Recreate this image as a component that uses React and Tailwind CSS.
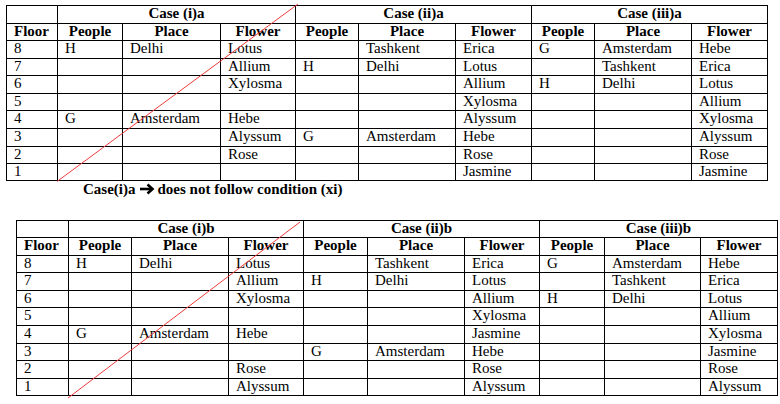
import React from "react";

const topCases = [
  {
    title: "Case (i)a",
    rows: [
      ["H", "Delhi", "Lotus"],
      ["", "", "Allium"],
      ["", "", "Xylosma"],
      ["", "", ""],
      ["G", "Amsterdam", "Hebe"],
      ["", "", "Alyssum"],
      ["", "", "Rose"],
      ["", "", ""],
    ],
  },
  {
    title: "Case (ii)a",
    rows: [
      ["", "Tashkent", "Erica"],
      ["H", "Delhi", "Lotus"],
      ["", "", "Allium"],
      ["", "", "Xylosma"],
      ["", "", "Alyssum"],
      ["G", "Amsterdam", "Hebe"],
      ["", "", "Rose"],
      ["", "", "Jasmine"],
    ],
  },
  {
    title: "Case (iii)a",
    rows: [
      ["G", "Amsterdam", "Hebe"],
      ["", "Tashkent", "Erica"],
      ["H", "Delhi", "Lotus"],
      ["", "", "Allium"],
      ["", "", "Xylosma"],
      ["", "", "Alyssum"],
      ["", "", "Rose"],
      ["", "", "Jasmine"],
    ],
  },
];

const bottomCases = [
  {
    title: "Case (i)b",
    rows: [
      ["H", "Delhi", "Lotus"],
      ["", "", "Allium"],
      ["", "", "Xylosma"],
      ["", "", ""],
      ["G", "Amsterdam", "Hebe"],
      ["", "", ""],
      ["", "", "Rose"],
      ["", "", "Alyssum"],
    ],
  },
  {
    title: "Case (ii)b",
    rows: [
      ["", "Tashkent", "Erica"],
      ["H", "Delhi", "Lotus"],
      ["", "", "Allium"],
      ["", "", "Xylosma"],
      ["", "", "Jasmine"],
      ["G", "Amsterdam", "Hebe"],
      ["", "", "Rose"],
      ["", "", "Alyssum"],
    ],
  },
  {
    title: "Case (iii)b",
    rows: [
      ["G", "Amsterdam", "Hebe"],
      ["", "Tashkent", "Erica"],
      ["H", "Delhi", "Lotus"],
      ["", "", "Allium"],
      ["", "", "Xylosma"],
      ["", "", "Jasmine"],
      ["", "", "Rose"],
      ["", "", "Alyssum"],
    ],
  },
];

const floors = ["8", "7", "6", "5", "4", "3", "2", "1"];

function Cell({ children, bold, center, className = "" }) {
  return (
    <div
      className={
        "bg-white overflow-hidden whitespace-nowrap leading-[14px] font-['Liberation_Serif',serif] " +
        (bold ? "font-bold " : "") +
        (center ? "text-center " : "pl-[7px] ") +
        className
      }
    >
      {children}
    </div>
  );
}

function CaseTable({ cases, colsClass, rowsClass }) {
  const cells = [];
  cells.push(<Cell key="blank" />);
  cases.forEach((c) =>
    cells.push(
      <Cell key={"t" + c.title} bold center className="col-span-3">
        {c.title}
      </Cell>
    )
  );
  cells.push(
    <Cell key="hf" bold>
      Floor
    </Cell>
  );
  cases.forEach((c, ci) => {
    cells.push(<Cell key={"hp" + ci} bold center>People</Cell>);
    cells.push(<Cell key={"hl" + ci} bold center>Place</Cell>);
    cells.push(<Cell key={"hw" + ci} bold center>Flower</Cell>);
  });
  floors.forEach((f, ri) => {
    cells.push(<Cell key={"f" + ri}>{f}</Cell>);
    cases.forEach((c, ci) => {
      c.rows[ri].forEach((v, vi) => {
        cells.push(<Cell key={"c" + ri + "-" + ci + "-" + vi}>{v}</Cell>);
      });
    });
  });
  return (
    <div className={"grid w-fit bg-black gap-px p-px " + colsClass + " " + rowsClass}>
      {cells}
    </div>
  );
}

export default function App() {
  return (
    <div className="relative w-[780px] h-[404px] bg-white text-black text-[15px] overflow-hidden font-['Liberation_Serif',serif]">
      <div className="pt-[5px] pl-[6px]">
        <CaseTable
          cases={topCases}
          colsClass="grid-cols-[50px_64px_97px_74px_62px_96px_75px_62px_96px_75px]"
          rowsClass="grid-rows-[17px_16px_17px_16px_17px_16px_17px_17px_16px_16px]"
        />
      </div>
      <div className="mt-[1px] pl-[83px] font-bold leading-[14px] flex items-center whitespace-nowrap font-['Liberation_Serif',serif]">
        <span>Case(i)a</span>
        <svg width="16" height="12" viewBox="0 0 16 12" className="mx-[3px]">
          <path d="M1 6 H13" stroke="black" strokeWidth="2.6" fill="none" />
          <path d="M8.5 1.5 L13.5 6 L8.5 10.5" stroke="black" strokeWidth="2.6" fill="none" />
        </svg>
        <span>does not follow condition (xi)</span>
      </div>
      <div className="mt-[24px] pl-[16px]">
        <CaseTable
          cases={bottomCases}
          colsClass="grid-cols-[51px_62px_96px_74px_63px_96px_74px_64px_95px_76px]"
          rowsClass="grid-rows-[16px_17px_16px_17px_16px_17px_17px_16px_17px_16px]"
        />
      </div>
      <svg
        className="absolute inset-0 pointer-events-none"
        width="780"
        height="404"
        viewBox="0 0 780 404"
      >
        <line x1="57" y1="181.5" x2="298" y2="4" stroke="#f03c3c" strokeWidth="1" />
        <line x1="68" y1="398" x2="300" y2="222" stroke="#f03c3c" strokeWidth="1" />
      </svg>
    </div>
  );
}
